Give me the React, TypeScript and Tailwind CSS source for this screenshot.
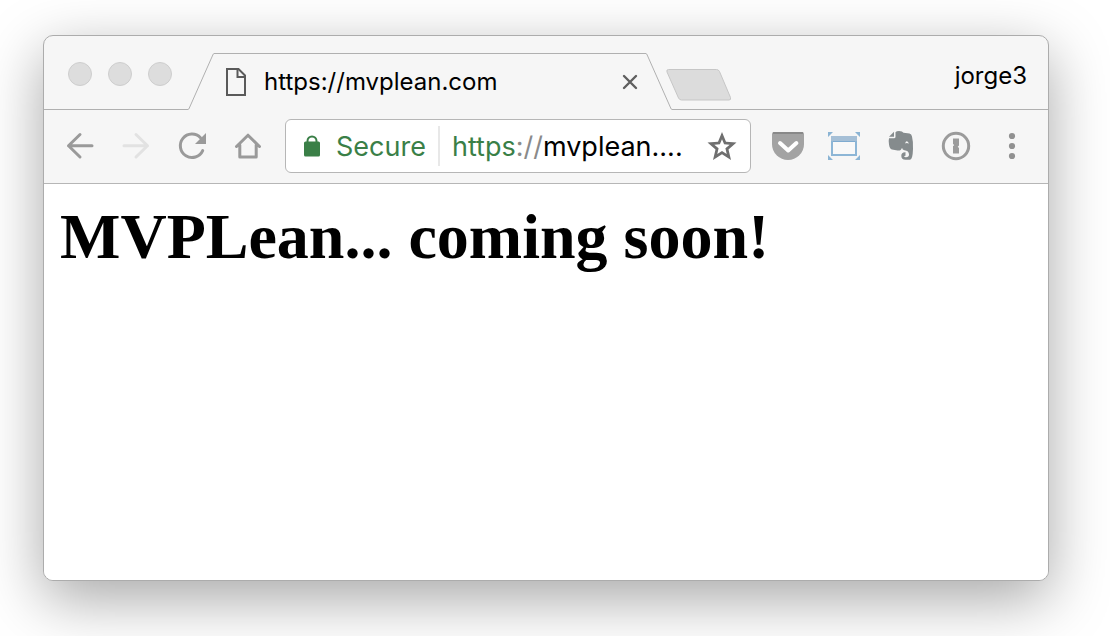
import type { ReactNode } from "react";

function IconButton({ label, children }: { label: string; children: ReactNode }) {
  return (
    <button type="button" aria-label={label} className="flex w-14 shrink-0 items-center justify-center self-stretch">
      {children}
    </button>
  );
}

function Glyph({ children, className = "text-[#9a9a9a]" }: { children: ReactNode; className?: string }) {
  return (
    <svg viewBox="0 0 32 32" fill="none" stroke="currentColor" strokeWidth="3" strokeLinecap="round" strokeLinejoin="round" className={`size-8 ${className}`}>
      {children}
    </svg>
  );
}

function WindowButtons() {
  return (
    <div className="flex w-36 shrink-0 items-start gap-4 border-b border-[#b0b0b0] pt-[26px] pl-6">
      {["Close", "Minimize", "Zoom"].map((name) => (
        <button key={name} type="button" aria-label={name} className="size-6 rounded-full border border-[#cecece] bg-[#dddddd]" />
      ))}
    </div>
  );
}

function Tab() {
  return (
    <div className="mt-[17px] flex max-w-[484px] grow">
      <svg viewBox="0 0 26 57" fill="none" stroke="#b0b0b0" className="h-[57px] w-[26px] shrink-0">
        <path d="M0 56.500Q.8 56.500 1.300 55L24.800 2Q25.400 .5 26 .5" />
      </svg>
      <div className="flex min-w-0 grow items-center border-t border-[#b0b0b0] pr-2 pl-3">
        <svg viewBox="0 0 20 28" fill="none" stroke="#5a5a5a" strokeWidth="2" className="h-7 w-5 shrink-0">
          <path d="M1 1h11.500L19 7.500V27H1z" />
          <path d="M11.500 1v8H19" />
        </svg>
        <span className="ml-[18px] min-w-0 grow truncate text-2xl text-black">https://mvplean.com</span>
        <button type="button" aria-label="Close tab" className="shrink-0">
          <svg viewBox="0 0 16 16" fill="none" stroke="#5f5f5f" strokeWidth="2.400" strokeLinecap="round" className="size-4">
            <path d="M2 2l12 12M14 2L2 14" />
          </svg>
        </button>
      </div>
      <svg viewBox="0 0 26 57" fill="none" stroke="#b0b0b0" className="h-[57px] w-[26px] shrink-0">
        <path d="M0 .5Q.6 .5 1.200 2L24.700 55Q25.200 56.500 26 56.500" />
      </svg>
    </div>
  );
}

function TabStrip() {
  return (
    <header className="flex h-[74px]">
      <WindowButtons />
      <Tab />
      <div className="flex grow items-start justify-between border-b border-[#b0b0b0] pr-[21px]">
        <button type="button" aria-label="New tab" className="mt-[33px] -ml-1.5">
          <svg viewBox="0 0 66 32" fill="#dcdcdc" stroke="#c6c6c6" className="h-8 w-[66px]">
            <path d="M2.500 .5H50.500Q52.500 .5 53.500 2.500L64.500 28.500Q65.300 31 63 31H15.500Q13.500 31 12.500 29L1 3Q.2 .5 2.500 .5z" />
          </svg>
        </button>
        <button type="button" className="mt-6 text-2xl text-black">jorge3</button>
      </div>
    </header>
  );
}

function AddressBar() {
  return (
    <div className="mx-[9px] flex h-[54px] min-w-0 grow items-center rounded-md border border-[#b6b6b6] bg-white pr-3 pl-[18px] text-[27px]">
      <svg viewBox="0 0 16 22" className="h-[22px] w-4 shrink-0">
        <path d="M3.500 8V5.900a4.500 4.500 0 0 1 9 0V8" fill="none" stroke="#3a7f47" strokeWidth="2" />
        <rect y="6.500" width="16" height="15" rx="1.500" fill="#3a7f47" />
      </svg>
      <span className="ml-4 pt-0.5 text-[#3a7f47]">Secure</span>
      <span className="ml-3 h-10 w-0.5 shrink-0 bg-[#e8e8e8]" />
      <label className="ml-3 flex min-w-0 grow items-center pt-0.5">
        <span className="text-[#3a7f47]">https</span>
        <span className="text-[#8a8a8a]">://</span>
        <input aria-label="Address" defaultValue="mvplean...." className="w-0 min-w-0 grow bg-transparent text-black outline-none" />
      </label>
      <button type="button" aria-label="Bookmark this page" className="shrink-0">
        <svg viewBox="-1 -1 32 32" fill="#6f6f6f" fillRule="evenodd" className="size-8">
          <path d="M15 1L19 10.700L29.500 11.600L21.500 18.400L24 29L15 23.200L6 29L8.500 18.400L.5 11.600L11 10.700zM15 8.200L12.900 13.200L7.300 13.700L11.600 17.300L10.300 22.900L15 19.900L19.700 22.900L18.400 17.300L22.700 13.700L17.100 13.200z" />
        </svg>
      </button>
    </div>
  );
}

function Toolbar() {
  return (
    <nav className="flex h-[74px] border-b border-[#b6b6b6] px-2 pt-[9px] pb-2.5">
      <IconButton label="Back">
        <Glyph>
          <path d="M4.500 15.700H28M16 4.500L4.500 15.700L16 27" />
        </Glyph>
      </IconButton>
      <IconButton label="Forward">
        <Glyph className="text-[#e2e2e2]">
          <path d="M4 15.700H27.500M16 4.500L27.500 15.700L16 27" />
        </Glyph>
      </IconButton>
      <IconButton label="Reload">
        <Glyph>
          <path d="M26.700 20.600A11.700 11.700 0 1 1 24.500 7.700" />
          <path d="M30 3v11H19z" fill="currentColor" stroke="none" />
        </Glyph>
      </IconButton>
      <IconButton label="Home">
        <Glyph>
          <path d="M4.500 16.500L16 5.200L27.500 16.500M7.800 15V27H24.200V15" />
        </Glyph>
      </IconButton>
      <AddressBar />
      <IconButton label="Save to Pocket">
        <svg viewBox="0 0 32 32" className="size-8">
          <path d="M2 2H30Q32 2 32 4V14A16 16 0 0 1 0 14V4Q0 2 2 2z" fill="#a3a3a3" />
          <path d="M1 3H31" stroke="#818181" strokeWidth="1.500" />
          <path d="M8 13l8.200 7.500L24.400 13" fill="none" stroke="#fff" strokeWidth="4" strokeLinecap="round" strokeLinejoin="round" />
        </svg>
      </IconButton>
      <IconButton label="Capture window">
        <svg viewBox="0 0 32 32" className="size-8">
          <path d="M0 2h5L0 7zM27 2h5v5zM0 25v5h5zM32 25v5h-5z" fill="#8bb4d4" />
          <rect x="4" y="7" width="24" height="18" fill="#f8f8f8" stroke="#8db6d6" strokeWidth="2" />
          <path d="M3 6h26v5H3z" fill="#a5bfd6" />
          <path d="M5 11.500h22" stroke="#7fabd0" />
        </svg>
      </IconButton>
      <IconButton label="Evernote">
        <svg viewBox="0 0 32 32" fill="#858b8d" className="size-8">
          <path d="M5 6.800L10 1.800V6.800z" />
          <path fillRule="evenodd" d="M11.500 2.200Q12.500 1 15 1Q18.500 1 19.500 2.700L25.500 3.500Q27.500 4 28 6.500Q29.400 12 29 19Q28.700 29.500 26 29.700H21.500Q17.300 29.700 17.300 25.700Q17.300 22 21.500 22.200V25.700Q20.200 25.500 20.200 26.400Q20.200 27.200 22 27.200Q25 27.200 25 24.500Q25 20.800 20.500 20.200Q18.300 19.800 18 17.700Q17 21 13.500 20.500L8 19.500Q5.600 18.900 5 14.500Q4.400 10.500 5 8.200H10Q11.500 8.200 11.500 6.700zM21.300 13.500Q23 12.400 24.800 13.800Q24.400 11.200 22.700 11.300Q21.200 11.500 21.300 13.500z" />
        </svg>
      </IconButton>
      <IconButton label="1Password">
        <svg viewBox="0 0 32 32" className="size-8">
          <circle cx="16" cy="16" r="12.700" fill="none" stroke="#9b9b9b" strokeWidth="3" />
          <path d="M13 8.500h6v7l-1.300 1.200 1.300 1.200V23.500h-6v-7.200l1.300-1.200L13 13.900z" fill="#9b9b9b" />
        </svg>
      </IconButton>
      <IconButton label="Menu">
        <svg viewBox="0 0 32 32" fill="#919191" className="size-8">
          <circle cx="16" cy="6" r="3.100" />
          <circle cx="16" cy="16" r="3.100" />
          <circle cx="16" cy="26" r="3.100" />
        </svg>
      </IconButton>
    </nav>
  );
}

export default function App() {
  return (
    <div className="flex min-h-screen bg-white pt-[35px] pr-[61px] pb-[55px] pl-[43px] font-['Inter','Liberation_Sans',sans-serif]">
      <div className="flex min-w-0 grow flex-col overflow-hidden rounded-[10px] border border-[#acacac] bg-[#f6f6f6] shadow-[0_18px_60px_rgba(0,0,0,0.35)]">
        <TabStrip />
        <Toolbar />
        <main className="grow bg-white p-4">
          <h1 className="font-['Liberation_Serif',serif] text-[64px] leading-[74px] font-bold text-black">MVPLean... coming soon!</h1>
        </main>
      </div>
    </div>
  );
}
